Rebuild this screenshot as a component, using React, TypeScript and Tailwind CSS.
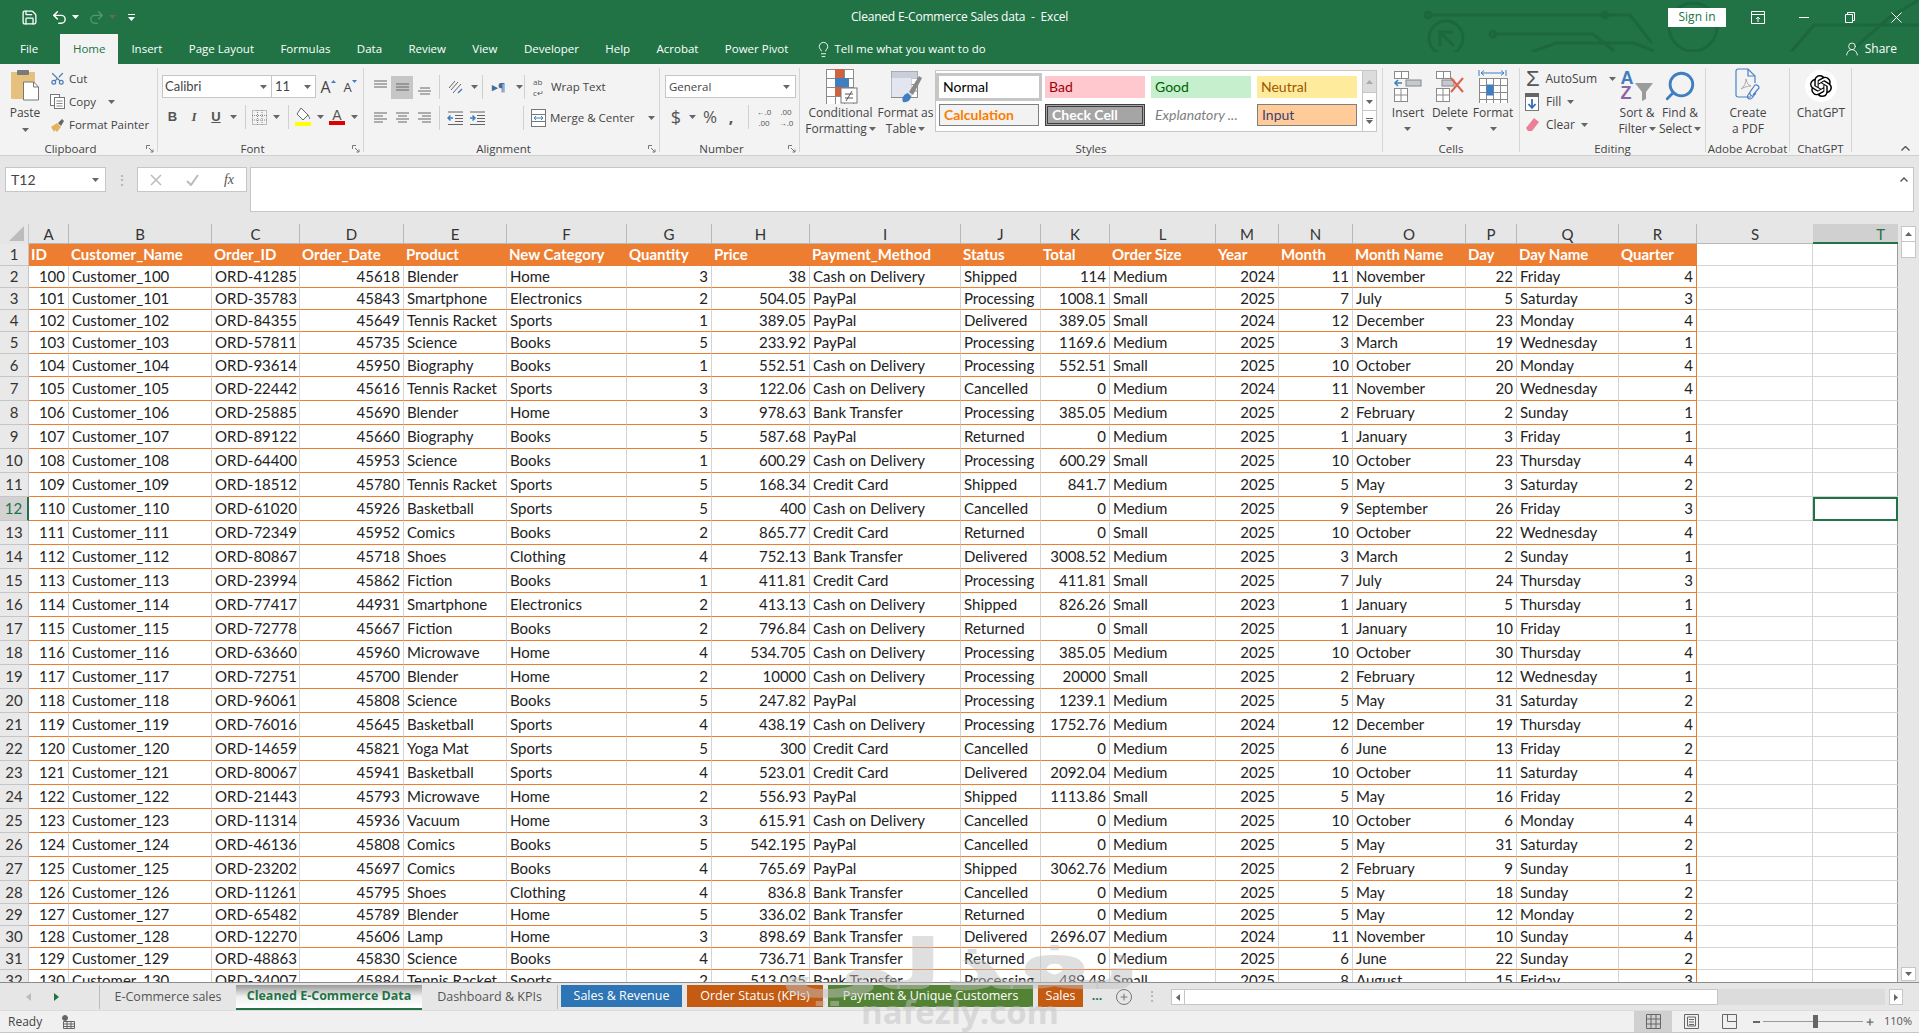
import { ReactNode } from 'react'
import { SiOpenai } from 'react-icons/si'
import { Lightbulb, Save, Undo2, Redo2, UserRound, Plus, Scissors, Search } from 'lucide-react'

const columns = [
    { name: 'A', w: 'w-[40px]', right: true, head: 'ID' },
    { name: 'B', w: 'w-[143px]', head: 'Customer_Name' },
    { name: 'C', w: 'w-[88px]', head: 'Order_ID' },
    { name: 'D', w: 'w-[104px]', right: true, head: 'Order_Date' },
    { name: 'E', w: 'w-[103px]', head: 'Product' },
    { name: 'F', w: 'w-[120px]', head: 'New Category' },
    { name: 'G', w: 'w-[85px]', right: true, head: 'Quantity' },
    { name: 'H', w: 'w-[98px]', right: true, head: 'Price' },
    { name: 'I', w: 'w-[151px]', head: 'Payment_Method' },
    { name: 'J', w: 'w-[80px]', head: 'Status' },
    { name: 'K', w: 'w-[69px]', right: true, head: 'Total' },
    { name: 'L', w: 'w-[106px]', head: 'Order Size' },
    { name: 'M', w: 'w-[63px]', right: true, head: 'Year' },
    { name: 'N', w: 'w-[74px]', right: true, head: 'Month' },
    { name: 'O', w: 'w-[113px]', head: 'Month Name' },
    { name: 'P', w: 'w-[51px]', right: true, head: 'Day' },
    { name: 'Q', w: 'w-[102px]', head: 'Day Name' },
    { name: 'R', w: 'w-[78px]', right: true, head: 'Quarter' },
]

const rows = `100|ORD-41285|45618|Blender|Home|3|38|Cash on Delivery|Shipped|114|Medium|2024|11|November|22|Friday|4
101|ORD-35783|45843|Smartphone|Electronics|2|504.05|PayPal|Processing|1008.1|Small|2025|7|July|5|Saturday|3
102|ORD-84355|45649|Tennis Racket|Sports|1|389.05|PayPal|Delivered|389.05|Small|2024|12|December|23|Monday|4
103|ORD-57811|45735|Science|Books|5|233.92|PayPal|Processing|1169.6|Medium|2025|3|March|19|Wednesday|1
104|ORD-93614|45950|Biography|Books|1|552.51|Cash on Delivery|Processing|552.51|Small|2025|10|October|20|Monday|4
105|ORD-22442|45616|Tennis Racket|Sports|3|122.06|Cash on Delivery|Cancelled|0|Medium|2024|11|November|20|Wednesday|4
106|ORD-25885|45690|Blender|Home|3|978.63|Bank Transfer|Processing|385.05|Medium|2025|2|February|2|Sunday|1
107|ORD-89122|45660|Biography|Books|5|587.68|PayPal|Returned|0|Medium|2025|1|January|3|Friday|1
108|ORD-64400|45953|Science|Books|1|600.29|Cash on Delivery|Processing|600.29|Small|2025|10|October|23|Thursday|4
109|ORD-18512|45780|Tennis Racket|Sports|5|168.34|Credit Card|Shipped|841.7|Medium|2025|5|May|3|Saturday|2
110|ORD-61020|45926|Basketball|Sports|5|400|Cash on Delivery|Cancelled|0|Medium|2025|9|September|26|Friday|3
111|ORD-72349|45952|Comics|Books|2|865.77|Credit Card|Returned|0|Small|2025|10|October|22|Wednesday|4
112|ORD-80867|45718|Shoes|Clothing|4|752.13|Bank Transfer|Delivered|3008.52|Medium|2025|3|March|2|Sunday|1
113|ORD-23994|45862|Fiction|Books|1|411.81|Credit Card|Processing|411.81|Small|2025|7|July|24|Thursday|3
114|ORD-77417|44931|Smartphone|Electronics|2|413.13|Cash on Delivery|Shipped|826.26|Small|2023|1|January|5|Thursday|1
115|ORD-72778|45667|Fiction|Books|2|796.84|Cash on Delivery|Returned|0|Small|2025|1|January|10|Friday|1
116|ORD-63660|45960|Microwave|Home|4|534.705|Cash on Delivery|Processing|385.05|Medium|2025|10|October|30|Thursday|4
117|ORD-72751|45700|Blender|Home|2|10000|Cash on Delivery|Processing|20000|Small|2025|2|February|12|Wednesday|1
118|ORD-96061|45808|Science|Books|5|247.82|PayPal|Processing|1239.1|Medium|2025|5|May|31|Saturday|2
119|ORD-76016|45645|Basketball|Sports|4|438.19|Cash on Delivery|Processing|1752.76|Medium|2024|12|December|19|Thursday|4
120|ORD-14659|45821|Yoga Mat|Sports|5|300|Credit Card|Cancelled|0|Medium|2025|6|June|13|Friday|2
121|ORD-80067|45941|Basketball|Sports|4|523.01|Credit Card|Delivered|2092.04|Medium|2025|10|October|11|Saturday|4
122|ORD-21443|45793|Microwave|Home|2|556.93|PayPal|Shipped|1113.86|Small|2025|5|May|16|Friday|2
123|ORD-11314|45936|Vacuum|Home|3|615.91|Cash on Delivery|Cancelled|0|Medium|2025|10|October|6|Monday|4
124|ORD-46136|45808|Comics|Books|5|542.195|PayPal|Cancelled|0|Medium|2025|5|May|31|Saturday|2
125|ORD-23202|45697|Comics|Books|4|765.69|PayPal|Shipped|3062.76|Medium|2025|2|February|9|Sunday|1
126|ORD-11261|45795|Shoes|Clothing|4|836.8|Bank Transfer|Cancelled|0|Medium|2025|5|May|18|Sunday|2
127|ORD-65482|45789|Blender|Home|5|336.02|Bank Transfer|Returned|0|Medium|2025|5|May|12|Monday|2
128|ORD-12270|45606|Lamp|Home|3|898.69|Bank Transfer|Delivered|2696.07|Medium|2024|11|November|10|Sunday|4
129|ORD-48863|45830|Science|Books|4|736.71|Bank Transfer|Returned|0|Medium|2025|6|June|22|Sunday|2
130|ORD-34007|45884|Tennis Racket|Sports|2|513.035|Bank Transfer|Processing|489.48|Small|2025|8|August|15|Friday|3`
    .split('\n')
    .map((line) => {
        const [id, ...rest] = line.split('|')
        return [id, `Customer_${id}`, ...rest]
    })

const rowHeight = (n: number) => {
    if (n === 6 || n === 28) return 'h-[23px]'
    if (n >= 7 && n <= 27) return 'h-[24px]'
    return 'h-[22px]'
}

const Caret = ({ className = '' }: { className?: string }) => (
    <svg width="7" height="4" viewBox="0 0 7 4" className={`shrink-0 text-[#666] ${className}`}>
        <path d="M0 0h7L3.5 4z" fill="currentColor" />
    </svg>
)

const Launcher = () => (
    <svg width="8" height="8" viewBox="0 0 8 8" fill="none" stroke="#777" strokeWidth="1">
        <path d="M.5 4V.5H4M3 3l4 4M7 4.5V7H4.5" />
    </svg>
)

const Sep = ({ className = 'h-[24px]' }: { className?: string }) => <div className={`w-px bg-[#d0d0d0] shrink-0 ${className}`} />

function Group({ w, label, launcher, children }: { w: string; label: string; launcher?: boolean; children: ReactNode }) {
    return (
        <div className={`${w} shrink-0 h-[84px] flex flex-col border-r border-[#d6d6d6]`}>
            <div className="h-[72px] flex">{children}</div>
            <div className={`h-[12px] relative flex justify-center whitespace-nowrap text-[11.5px] leading-[18px] text-[#444] ${launcher ? 'pr-[16px]' : ''}`}>
                {label}
                {launcher && (
                    <span className="absolute right-[3px] top-[5px]">
                        <Launcher />
                    </span>
                )}
            </div>
        </div>
    )
}

function BigButton({ w, icon, lines, caret }: { w: string; icon: ReactNode; lines: string[]; caret?: 'inline' | 'below' }) {
    return (
        <div className={`${w} shrink-0 flex flex-col items-center pt-[2px] text-[12px] leading-[16px] text-[#444]`}>
            <div className="h-[32px] flex items-center justify-center">{icon}</div>
            <div className="mt-[3px] flex flex-col items-center whitespace-nowrap">
                {lines.map((line, i) => (
                    <div key={line} className="h-[16px] flex items-center gap-[2px]">
                        {line}
                        {caret === 'inline' && i === lines.length - 1 && <Caret />}
                    </div>
                ))}
                {caret === 'below' && (
                    <div className="h-[16px] flex items-center">
                        <Caret />
                    </div>
                )}
            </div>
        </div>
    )
}

const Tool = ({ w, children, className = '' }: { w: string; children: ReactNode; className?: string }) => (
    <div className={`${w} h-[23px] shrink-0 flex items-center justify-center ${className}`}>{children}</div>
)

function Lines({ align }: { align: 'top' | 'middle' | 'bottom' | 'left' | 'center' | 'right' }) {
    const vertical = {
        top: 'M1 2h13M1 5h13M1 8h13',
        middle: 'M1 5h13M1 8h13M1 11h13',
        bottom: 'M3 9h10M1 12h13M3 15h10',
    }
    const horizontal = {
        left: 'M1 3h13M1 6h9M1 9h13M1 12h9',
        center: 'M1 3h13M3 6h9M1 9h13M3 12h9',
        right: 'M1 3h13M5 6h9M1 9h13M5 12h9',
    }
    const d = { ...vertical, ...horizontal }[align]
    return (
        <svg width="15" height="16" viewBox="0 0 15 16" fill="none" stroke="#666" strokeWidth="1">
            <path d={d} />
        </svg>
    )
}

const GridIcon = ({ rows: r, cols, x, y, s }: { rows: number; cols: number; x: number; y: number; s: number }) => (
    <g fill="none" stroke="#8a8a8a" strokeWidth="1">
        <rect x={x + 0.5} y={y + 0.5} width={cols * s} height={r * s} fill="#fff" />
        {Array.from({ length: cols - 1 }, (_, i) => (
            <path key={`c${i}`} d={`M${x + 0.5 + (i + 1) * s} ${y}v${r * s}`} />
        ))}
        {Array.from({ length: r - 1 }, (_, i) => (
            <path key={`r${i}`} d={`M${x} ${y + 0.5 + (i + 1) * s}h${cols * s}`} />
        ))}
    </g>
)

const PasteIcon = () => (
    <svg width="30" height="32" viewBox="0 0 30 32">
        <rect x="1" y="3" width="24" height="27" rx="1" fill="#e6c17e" />
        <rect x="7" y="1" width="12" height="5" rx="1" fill="#7a7a7a" />
        <path d="M13.5 13h10l5 5v13h-15z" fill="#fff" stroke="#777" />
        <path d="M23.5 13v5h5" fill="none" stroke="#777" />
    </svg>
)

const CopyIcon = () => (
    <svg width="15" height="15" viewBox="0 0 15 15" fill="#fff" stroke="#777">
        <rect x=".5" y=".5" width="9" height="11" />
        <rect x="4.5" y="3.5" width="10" height="11" />
        <path d="M6.5 7h6M6.5 9.5h6M6.5 12h6" stroke="#888" />
    </svg>
)

const PainterIcon = () => (
    <svg width="16" height="16" viewBox="0 0 16 16">
        <path d="M1 10l6-4 4 4-4 5-2-2-1 2z" fill="#e3b25d" />
        <path d="M8 6l4-4 2 2-3 5z" fill="#666" />
    </svg>
)

const FillIcon = () => (
    <svg width="16" height="20" viewBox="0 0 16 20" fill="none">
        <path d="M6 1l7 7-5 5-6-6z" fill="#fff" stroke="#666" />
        <path d="M13 8c1 2 2 3 1.500 4" stroke="#666" />
        <rect x="0" y="15" width="16" height="4" fill="#ffff00" />
    </svg>
)

const CondIcon = () => (
    <svg width="34" height="36" viewBox="0 0 34 36">
        <GridIcon rows={4} cols={3} x={2} y={1} s={9} />
        <rect x="11" y="1" width="9" height="9" fill="#d0633e" />
        <rect x="11" y="10" width="14" height="9" fill="#3f7fc1" />
        <rect x="11" y="19" width="9" height="9" fill="#d0633e" />
        <rect x="17" y="20" width="16" height="15" fill="#fff" stroke="#777" />
        <path d="M21 26h8M21 30h8M28 23l-6 10" stroke="#555" fill="none" />
    </svg>
)

const TableIcon = () => (
    <svg width="32" height="36" viewBox="0 0 32 36">
        <GridIcon rows={4} cols={4} x={1} y={3} s={6.5} />
        <rect x="1.500" y="3.500" width="26" height="6.500" fill="#c9cedb" />
        <rect x="1.500" y="10" width="20" height="19" fill="#e3e6ee" />
        <path d="M13 34c-2-4 1-8 5-9l3 3c0 4-4 7-8 6z" fill="#3f7fc1" />
        <path d="M19 24L29 8l3 2-9 17z" fill="#8a8a8a" />
    </svg>
)

const InsertIcon = () => (
    <svg width="30" height="32" viewBox="0 0 30 32">
        <GridIcon rows={1} cols={2} x={1} y={1} s={7} />
        <GridIcon rows={2} cols={2} x={1} y={18} s={6.500} />
        <rect x="13" y="10" width="15" height="6" fill="#c4c8d0" stroke="#888" />
        <path d="M2 13h7M5 10l-3 3 3 3" stroke="#3f7fc1" strokeWidth="1.600" fill="none" />
    </svg>
)

const DeleteIcon = () => (
    <svg width="30" height="32" viewBox="0 0 30 32">
        <GridIcon rows={1} cols={2} x={1} y={1} s={7} />
        <GridIcon rows={2} cols={2} x={1} y={18} s={6.500} />
        <rect x="7" y="10" width="12" height="6" fill="#c4c8d0" stroke="#888" />
        <path d="M16 8l12 14M28 8L16 22" stroke="#d9634c" strokeWidth="2" fill="none" />
    </svg>
)

const FormatIcon = () => (
    <svg width="30" height="34" viewBox="0 0 30 34">
        <path d="M3 4h23M6 1.500L3 4l3 2.500M23 1.500L26 4l-3 2.500M1 1v6M28 1v6" stroke="#3f7fc1" fill="none" />
        <GridIcon rows={4} cols={4} x={1} y={9} s={7} />
        <rect x="8.500" y="15.500" width="7" height="11" fill="#3f7fc1" />
    </svg>
)

const SortIcon = () => (
    <svg width="34" height="34" viewBox="0 0 34 34">
        <path d="M15 14h18l-7 9v7l-4 2v-9z" fill="#9b9b9b" />
    </svg>
)

const PdfIcon = () => (
    <svg width="28" height="36" viewBox="0 0 28 36" fill="none" stroke="#4d7fc9" strokeWidth="1.200">
        <path d="M17 29H4a2 2 0 0 1-2-2V3a2 2 0 0 1 2-2h10l7 7v7" />
        <path d="M14 1v7h7" />
        <path d="M7 21c3-2 5-6 5-10 1 4 2 6 5 7-3 0-7 1-10 3z" strokeWidth=".8" stroke="#9a9aa0" />
        <path d="M19 27l6-7a3 3 0 0 0-4-3l-5 7a3 3 0 0 0 3 4M18 21l-4 6a2.500 2.500 0 0 0 4 3l4-5" />
    </svg>
)

const ViewIcon = ({ d }: { d: string }) => (
    <svg width="15" height="17" viewBox="0 0 15 17" fill="none" stroke="#666">
        <path d={d} />
    </svg>
)

const styleCell = 'h-[22px] flex items-center pl-[4px] pb-[2px] text-[14px] font-[Lato,sans-serif] overflow-hidden whitespace-nowrap'

function Ribbon() {
    return (
        <div className="h-[92px] shrink-0 bg-[#f3f3f3] border-b border-[#d0d0d0] pt-[4px] flex font-['Open_Sans',sans-serif]">
            <Group w="w-[158px]" label="Clipboard" launcher>
                <div className="w-[50px] shrink-0 flex flex-col items-center pt-[1px] text-[12px] leading-[16px] text-[#444]">
                    <PasteIcon />
                    <div className="mt-[4px]">Paste</div>
                    <Caret className="mt-[7px]" />
                </div>
                <div className="-mt-[1px] flex flex-col text-[11.5px] text-[#444] whitespace-nowrap">
                    <div className="h-[23px] flex items-center gap-[4px]">
                        <Scissors size={15} className="text-[#4d7fb3] -rotate-90" />
                        Cut
                    </div>
                    <div className="h-[23px] flex items-center gap-[4px]">
                        <CopyIcon />
                        Copy
                        <Caret className="ml-[8px]" />
                    </div>
                    <div className="h-[23px] flex items-center gap-[3px]">
                        <PainterIcon />
                        Format Painter
                    </div>
                </div>
            </Group>

            <Group w="w-[206px]" label="Font" launcher>
                <div className="pl-[4px] pt-[7px] flex flex-col gap-[7px]">
                    <div className="flex items-center text-[#444]">
                        <div className="w-[110px] h-[23px] bg-white border border-[#c6c6c6] flex items-center justify-between pl-[2px] pr-[4px] text-[13px] font-[Lato,sans-serif]">
                            Calibri
                            <Caret />
                        </div>
                        <div className="w-[44px] h-[23px] bg-white border border-[#c6c6c6] border-l-0 flex items-center justify-between pl-[3px] pr-[4px] text-[13px] font-[Lato,sans-serif]">
                            11
                            <Caret />
                        </div>
                        <Tool w="w-[22px]" className="text-[16px] ml-[1px]">
                            <span>A</span>
                            <svg width="5" height="3" viewBox="0 0 5 3" className="-mt-[10px]">
                                <path d="M0 3h5L2.500 0z" fill="#3f7fc1" />
                            </svg>
                        </Tool>
                        <Tool w="w-[22px]" className="text-[13px]">
                            <span className="mt-[2px]">A</span>
                            <svg width="5" height="3" viewBox="0 0 5 3" className="-mt-[10px]">
                                <path d="M0 0h5L2.500 3z" fill="#3f7fc1" />
                            </svg>
                        </Tool>
                    </div>
                    <div className="flex items-center text-[#555] text-[13px]">
                        <Tool w="w-[21px]" className="font-bold font-['Liberation_Sans']">B</Tool>
                        <Tool w="w-[22px]" className="italic font-['Liberation_Serif'] font-bold">I</Tool>
                        <Tool w="w-[22px]" className="underline font-bold font-['Liberation_Sans']">U</Tool>
                        <Tool w="w-[12px]"><Caret /></Tool>
                        <Sep className="h-[24px] ml-[6px]" />
                        <Tool w="w-[26px]">
                            <svg width="15" height="15" viewBox="0 0 15 15" fill="none" stroke="#888" strokeDasharray="1 1">
                                <path d="M.5.500h14v14H.500zM5.500 0v15M10 0v15M0 5.500h15M0 10h15" />
                            </svg>
                        </Tool>
                        <Tool w="w-[8px]"><Caret /></Tool>
                        <Sep className="h-[24px] ml-[8px]" />
                        <Tool w="w-[28px]"><FillIcon /></Tool>
                        <Tool w="w-[6px]"><Caret /></Tool>
                        <Tool w="w-[28px]" className="flex-col leading-[12px] font-['Liberation_Sans'] text-[14px]">
                            A
                            <span className="block w-[16px] h-[4px] bg-[#e00000]" />
                        </Tool>
                        <Tool w="w-[6px]"><Caret /></Tool>
                    </div>
                </div>
            </Group>

            <Group w="w-[296px]" label="Alignment" launcher>
                <div className="pl-[5px] pt-[7px] flex flex-col gap-[7px] text-[11.5px] text-[#444] whitespace-nowrap">
                    <div className="flex items-center">
                        <Tool w="w-[22px]"><Lines align="top" /></Tool>
                        <Tool w="w-[22px]" className="bg-[#c6c6c6]"><Lines align="middle" /></Tool>
                        <Tool w="w-[22px]"><Lines align="bottom" /></Tool>
                        <Sep className="h-[24px] ml-[4px]" />
                        <Tool w="w-[30px]">
                            <svg width="16" height="16" viewBox="0 0 16 16" fill="none" stroke="#666">
                                <path d="M2 9l6-7M4 11l7-8M6 14l8-9" />
                                <path d="M11 14l4-4" stroke="#3f7fc1" strokeWidth="1.500" />
                            </svg>
                        </Tool>
                        <Tool w="w-[9px]"><Caret /></Tool>
                        <Sep className="h-[24px] ml-[3px]" />
                        <Tool w="w-[31px]">
                            <span className="text-[#3f6f9f] text-[11px] font-bold">▸¶</span>
                        </Tool>
                        <Tool w="w-[10px]"><Caret /></Tool>
                        <Sep className="h-[24px]" />
                        <div className="h-[23px] flex items-center ml-[8px] gap-[5px]">
                            <div className="w-[13px] flex flex-col text-[8px] leading-[11px] text-[#555]">
                                <span>ab</span>
                                <span>c↵</span>
                            </div>
                            Wrap Text
                        </div>
                    </div>
                    <div className="flex items-center">
                        <Tool w="w-[22px]"><Lines align="left" /></Tool>
                        <Tool w="w-[22px]"><Lines align="center" /></Tool>
                        <Tool w="w-[22px]"><Lines align="right" /></Tool>
                        <Sep className="h-[24px] ml-[4px]" />
                        <Tool w="w-[22px]" className="ml-[4px]">
                            <svg width="16" height="14" viewBox="0 0 16 14" fill="none" stroke="#666">
                                <path d="M1 1h15M8 4.500h8M8 7.500h8M8 10.500h8M1 13.500h15" />
                                <path d="M6 7H1M3.500 4.500L1 7l2.500 2.500" stroke="#3f7fc1" strokeWidth="1.500" />
                            </svg>
                        </Tool>
                        <Tool w="w-[22px]">
                            <svg width="16" height="14" viewBox="0 0 16 14" fill="none" stroke="#666">
                                <path d="M1 1h15M8 4.500h8M8 7.500h8M8 10.500h8M1 13.500h15" />
                                <path d="M1 7h5M3.500 4.500L6 7 3.500 9.500" stroke="#3f7fc1" strokeWidth="1.500" />
                            </svg>
                        </Tool>
                        <Sep className="h-[24px] ml-[35px]" />
                        <div className="h-[23px] flex items-center ml-[7px] gap-[4px]">
                            <svg width="15" height="18" viewBox="0 0 15 18" fill="#fff" stroke="#777">
                                <rect x=".5" y=".5" width="14" height="17" />
                                <path d="M0 5.500h15M0 12.500h15" />
                                <path d="M3 9h9M5 7L3 9l2 2M10 7l2 2-2 2" stroke="#3f7fc1" fill="none" />
                            </svg>
                            Merge &amp; Center
                            <Caret className="ml-[9px]" />
                        </div>
                    </div>
                </div>
            </Group>

            <Group w="w-[140px]" label="Number" launcher>
                <div className="pl-[5px] pt-[7px] flex flex-col gap-[7px] text-[#555]">
                    <div className="w-[131px] h-[23px] bg-white border border-[#c6c6c6] flex items-center justify-between pl-[3px] pr-[5px] text-[11.5px] text-[#444]">
                        General
                        <Caret />
                    </div>
                    <div className="flex items-center">
                        <Tool w="w-[22px]" className="text-[18px]">$</Tool>
                        <Tool w="w-[10px]"><Caret /></Tool>
                        <Tool w="w-[26px]" className="text-[17px]">%</Tool>
                        <Tool w="w-[16px]" className="text-[16px] font-bold">,</Tool>
                        <Sep className="h-[24px] ml-[9px]" />
                        <Tool w="w-[26px]" className="flex-col text-[8px] leading-[11px] ml-[2px]">
                            <span>←.0</span>
                            <span>.00</span>
                        </Tool>
                        <Tool w="w-[18px]" className="flex-col text-[8px] leading-[11px]">
                            <span>.00</span>
                            <span>→.0</span>
                        </Tool>
                    </div>
                </div>
            </Group>

            <Group w="w-[583px]" label="Styles">
                <BigButton w="w-[65px] ml-[8px]" icon={<CondIcon />} lines={['Conditional', 'Formatting']} caret="inline" />
                <BigButton w="w-[65px]" icon={<TableIcon />} lines={['Format as', 'Table']} caret="inline" />
                <div className="mt-[2px] -ml-[3px] w-[442px] h-[62px] bg-white border border-[#c6c6c6] flex relative">
                    <div className="pl-[3px] pt-[5px] grid grid-cols-[100px_100px_100px_100px] grid-rows-[22px_22px] gap-[6px]">
                        <div className={`${styleCell} bg-white outline-3 outline-[#c6c6c6] text-black`}>Normal</div>
                        <div className={`${styleCell} bg-[#ffc7ce] text-[#9c0006]`}>Bad</div>
                        <div className={`${styleCell} bg-[#c6efce] text-[#006100]`}>Good</div>
                        <div className={`${styleCell} bg-[#ffeb9c] text-[#9c5700]`}>Neutral</div>
                        <div className={`${styleCell} bg-[#f2f2f2] border border-[#7f7f7f] text-[#fa7d00] font-bold`}>Calculation</div>
                        <div className={`${styleCell} bg-[#a5a5a5] border-[3px] border-double border-[#3f3f3f] text-white font-bold`}>Check Cell</div>
                        <div className={`${styleCell} italic text-[#7f7f7f]`}>Explanatory ...</div>
                        <div className={`${styleCell} bg-[#ffcc99] border border-[#7f7f7f] text-[#3f3f76]`}>Input</div>
                    </div>
                    <div className="ml-auto w-[14px] flex flex-col border-l border-[#c6c6c6]">
                        <div className="h-[21px] bg-[#dcdcdc] flex items-center justify-center"><Caret className="rotate-180 text-[#aaa]" /></div>
                        <div className="h-[19px] border-y border-[#c6c6c6] flex items-center justify-center"><Caret /></div>
                        <div className="flex-1 flex flex-col items-center justify-center gap-[1px]">
                            <div className="w-[7px] h-px bg-[#666]" />
                            <Caret />
                        </div>
                    </div>
                </div>
            </Group>

            <Group w="w-[137px]" label="Cells">
                <BigButton w="w-[42px] ml-[4px]" icon={<InsertIcon />} lines={['Insert']} caret="below" />
                <BigButton w="w-[42px]" icon={<DeleteIcon />} lines={['Delete']} caret="below" />
                <BigButton w="w-[44px]" icon={<FormatIcon />} lines={['Format']} caret="below" />
            </Group>

            <Group w="w-[186px]" label="Editing">
                <div className="w-[91px] ml-[5px] -mt-[1px] shrink-0 flex flex-col text-[12px] text-[#444]">
                    <div className="h-[23px] flex items-center gap-[5px]">
                        <span className="w-[16px] text-[22px] font-['Liberation_Sans'] text-[#555] leading-none text-center">Σ</span>
                        AutoSum
                        <Caret className="ml-[7px]" />
                    </div>
                    <div className="h-[23px] flex items-center gap-[6px]">
                        <svg width="15" height="18" viewBox="0 0 15 18">
                            <rect x=".5" y=".5" width="13" height="17" fill="#fff" stroke="#777" />
                            <rect x="0" y="0" width="14" height="4" fill="#666" />
                            <path d="M7 6v9M3.500 11L7 15l3.500-4" stroke="#2f6fb3" strokeWidth="1.800" fill="none" />
                        </svg>
                        Fill
                        <Caret />
                    </div>
                    <div className="h-[23px] flex items-center gap-[6px]">
                        <svg width="15" height="16" viewBox="0 0 15 16">
                            <path d="M9 1l5 4-7 9H3l-2-3z" fill="#ea7f97" />
                        </svg>
                        Clear
                        <Caret />
                    </div>
                </div>
                <BigButton
                    w="w-[42px]"
                    icon={
                        <div className="flex items-center">
                            <div className="flex flex-col text-[18px] leading-[15px] font-bold font-['Liberation_Sans']">
                                <span className="text-[#3f7fc1]">A</span>
                                <span className="text-[#8a66a8]">Z</span>
                            </div>
                            <div className="-ml-[14px]"><SortIcon /></div>
                        </div>
                    }
                    lines={['Sort &', 'Filter']}
                    caret="inline"
                />
                <BigButton w="w-[44px]" icon={<Search size={34} strokeWidth={2} className="text-[#3f7fc1] -scale-x-100" />} lines={['Find &', 'Select']} caret="inline" />
            </Group>

            <Group w="w-[84px]" label="Adobe Acrobat">
                <BigButton w="w-[84px]" icon={<PdfIcon />} lines={['Create', 'a PDF']} />
            </Group>

            <Group w="w-[62px]" label="ChatGPT">
                <BigButton
                    w="w-[62px]"
                    icon={
                        <div className="w-[32px] h-[32px] rounded-full bg-white flex items-center justify-center">
                            <SiOpenai size={22} className="text-black" />
                        </div>
                    }
                    lines={['ChatGPT']}
                />
            </Group>

            <div className="flex-1 flex justify-end items-end pr-[9px] pb-[4px]">
                <svg width="9" height="5" viewBox="0 0 9 5" fill="none" stroke="#555" strokeWidth="1.400">
                    <path d="M.5 4.500l4-4 4 4" />
                </svg>
            </div>
        </div>
    )
}

function TitleBar() {
    const tabs = ['Insert', 'Page Layout', 'Formulas', 'Data', 'Review', 'View', 'Developer', 'Help', 'Acrobat', 'Power Pivot']
    return (
        <div className="h-[64px] shrink-0 bg-[#217346] text-white relative font-['Open_Sans',sans-serif]">
            <svg width="497" height="52" viewBox="1422 0 497 52" fill="none" stroke="#1d673e" strokeWidth="3" className="absolute right-0 top-0">
                <path d="M1428 15h177h25l22 28M1493 34h100l21 17M1532 52l24-9h78l20 8M1791 52l23-27h105M1850 52l40-35 29-17" />
                <circle cx="1428" cy="15" r="3" />
                <circle cx="1605" cy="15" r="3" />
                <circle cx="1493" cy="34" r="3" />
                <circle cx="1446" cy="38" r="17" />
                <path d="M1440 46v-14h13M1440 32l14 14" />
                <circle cx="1693" cy="27" r="24" />
            </svg>
            <div className="relative h-[34px] grid grid-cols-[1fr_auto_1fr] items-center">
                <div className="flex items-center pl-[21px]">
                    <Save size={17} strokeWidth={1.800} />
                    <Undo2 size={17} strokeWidth={2} className="ml-[13px]" />
                    <Caret className="ml-[4px] text-white" />
                    <Redo2 size={17} strokeWidth={2} className="ml-[9px] text-[#4c9670]" />
                    <Caret className="ml-[4px] text-[#4c9670]" />
                    <svg width="7" height="7" viewBox="0 0 7 7" fill="#fff" className="ml-[12px]">
                        <path d="M0 0h7v1H0zM0 3h7L3.500 7z" />
                    </svg>
                </div>
                <div className="text-[12px] tracking-[-0.2px]">Cleaned E-Commerce Sales data&nbsp; -&nbsp; Excel</div>
                <div className="flex items-center justify-end">
                    <div className="w-[58px] h-[19px] bg-white text-[#217346] text-[12px] flex items-center justify-center">Sign in</div>
                    <svg width="14" height="13" viewBox="0 0 14 13" fill="none" stroke="#fff" className="ml-[25px]">
                        <path d="M.5 3.500v9h13v-9zM.5.500h13v3H.5zM7 11V6M5 8l2-2 2 2" />
                    </svg>
                    <div className="w-[10px] h-px bg-white ml-[34px]" />
                    <svg width="10" height="11" viewBox="0 0 10 11" fill="none" stroke="#fff" className="ml-[36px]">
                        <path d="M.5 2.500h7v8h-7zM2.500 2.500v-2h7v8h-2" />
                    </svg>
                    <svg width="11" height="11" viewBox="0 0 11 11" fill="none" stroke="#fff" className="ml-[36px] mr-[17px]">
                        <path d="M.5.500l10 10M10.500.500l-10 10" />
                    </svg>
                </div>
            </div>
            <div className="relative h-[30px] flex text-[11.5px] items-stretch pl-[6px]">
                <div className="pl-[14px] pr-[22px] flex items-center">File</div>
                <div className="w-[58px] justify-center bg-[#f3f3f3] text-[#217346] flex items-center">Home</div>
                {tabs.map((tab) => (
                    <div key={tab} className="px-[13.200px] flex items-center whitespace-nowrap">{tab}</div>
                ))}
                <div className="ml-[13px] flex items-center gap-[3px] whitespace-nowrap">
                    <Lightbulb size={17} strokeWidth={1.300} />
                    Tell me what you want to do
                </div>
                <div className="ml-auto mr-[22px] flex items-center gap-[5px] text-[12px]">
                    <UserRound size={16} strokeWidth={1.300} />
                    Share
                </div>
            </div>
        </div>
    )
}

function FormulaBar() {
    return (
        <div className="h-[68px] shrink-0 bg-[#e6e6e6] pt-[11px] pl-[5px] pr-[5px] flex font-[Lato,sans-serif]">
            <div className="w-[101px] h-[25px] bg-white border border-[#c6c6c6] flex items-center justify-between pl-[5px] pr-[6px] text-[14px] text-[#444]">
                T12
                <Caret />
            </div>
            <div className="w-[31px] h-[25px] flex items-center justify-center text-[#aaa] text-[14px]">⋮</div>
            <div className="w-[110px] h-[25px] bg-white border border-[#c6c6c6] flex items-center justify-between px-[12px] text-[#bbb]">
                <svg width="12" height="12" viewBox="0 0 12 12" stroke="currentColor" strokeWidth="1.500">
                    <path d="M1 1l10 10M11 1L1 11" />
                </svg>
                <svg width="13" height="12" viewBox="0 0 13 12" fill="none" stroke="currentColor" strokeWidth="2">
                    <path d="M1 7l4 4 7-10" />
                </svg>
                <span className="text-[14px] italic font-['Liberation_Serif'] text-[#555]">fx</span>
            </div>
            <div className="ml-[3px] flex-1 h-[45px] bg-white border border-[#c6c6c6] flex justify-end pt-[9px] pr-[5px]">
                <svg width="8" height="5" viewBox="0 0 8 5" fill="none" stroke="#555" strokeWidth="1.400">
                    <path d="M.5 4.500l3.500-3.500 3.500 3.500" />
                </svg>
            </div>
        </div>
    )
}

function Sheet() {
    return (
        <div className="flex-1 min-h-0 flex overflow-hidden font-[Lato,sans-serif] text-[15px] text-[#222]">
            <div className="w-[1898px] shrink-0 bg-white border-r border-[#9a9a9a]">
                <div className="h-[20px] flex bg-[#e6e6e6] text-[15px] leading-[20px] text-[#333]">
                    <div className="w-[29px] shrink-0 border-r border-[#c6c6c6] flex items-end justify-end pr-[4px] pb-[3px]">
                        <svg width="15" height="15" viewBox="0 0 15 15"><path d="M15 0v15H0z" fill="#bcbcbc" /></svg>
                    </div>
                    {columns.map((c) => (
                        <div key={c.name} className={`${c.w} shrink-0 border-r border-b border-[#b8b8b8] text-center`}>{c.name}</div>
                    ))}
                    <div className="w-[116px] shrink-0 border-b border-[#b8b8b8] text-center">S</div>
                    <div className="w-[85px] shrink-0 bg-[#d0d0d0] border-b-2 border-[#217346] text-[#217346] text-right pr-[13px]">T</div>
                </div>

                <div className="h-[22px] flex font-bold text-white leading-[21px]">
                    <div className="w-[29px] shrink-0 bg-[#e9e9e9] border-r border-b border-[#c6c6c6] text-center text-[#333] font-normal">1</div>
                    {columns.map((c) => (
                        <div key={c.name} className={`${c.w} shrink-0 bg-[#ed7d31] pl-[2px] whitespace-nowrap overflow-hidden`}>{c.head}</div>
                    ))}
                    <div className="w-[116px] shrink-0 border-r border-b border-[#d4d4d4]" />
                    <div className="w-[85px] shrink-0 border-b border-[#d4d4d4]" />
                </div>

                {rows.map((row, r) => {
                    const n = r + 2
                    const active = n === 12
                    return (
                        <div key={n} className={`flex ${rowHeight(n)}`}>
                            <div className={`w-[29px] shrink-0 border-b border-[#c6c6c6] flex items-center justify-center ${active ? 'bg-[#d2d2d2] text-[#217346] border-r-2 border-r-[#217346]' : 'bg-[#e9e9e9] text-[#333] border-r'}`}>{n}</div>
                            {columns.map((c, i) => (
                                <div key={c.name} className={`${c.w} shrink-0 flex items-center px-[3px] whitespace-nowrap overflow-hidden border-r border-r-[#d4d4d4] border-b border-b-[#ed7d31] ${c.right ? 'justify-end' : ''} ${i === columns.length - 1 ? 'border-r-[#ed7d31]' : ''}`}>{row[i]}</div>
                            ))}
                            <div className="w-[116px] shrink-0 border-r border-b border-[#d4d4d4]" />
                            <div className={`w-[85px] shrink-0 ${active ? 'border-2 border-[#217346]' : 'border-b border-[#d4d4d4]'}`} />
                        </div>
                    )
                })}
            </div>
            <div className="flex-1 bg-[#e6e6e6] flex flex-col items-center pt-[2px] pb-[1px]">
                <div className="w-[15px] h-[16px] bg-white border border-[#c6c6c6] flex items-center justify-center"><Caret className="rotate-180" /></div>
                <div className="w-[15px] h-[17px] bg-white border border-[#c6c6c6] -mt-px" />
                <div className="w-[15px] h-[14px] mt-auto bg-white border border-[#c6c6c6] flex items-center justify-center"><Caret /></div>
            </div>
        </div>
    )
}

function SheetTabs() {
    return (
        <div className="h-[28px] shrink-0 bg-[#e6e6e6] border-t border-[#8c8c8c] flex items-start font-['Open_Sans',sans-serif] text-[12.5px] whitespace-nowrap">
            <div className="w-[100px] h-[24px] mt-[2px] shrink-0 flex items-center pl-[26px] gap-[23px] border-r border-[#bcbcbc]">
                <svg width="5" height="8" viewBox="0 0 5 8"><path d="M5 0v8L0 4z" fill="#bbb" /></svg>
                <svg width="5" height="8" viewBox="0 0 5 8"><path d="M0 0v8l5-4z" fill="#217346" /></svg>
            </div>
            <div className="w-[136px] h-[24px] mt-[2px] flex items-center justify-center text-[#555]">E-Commerce sales</div>
            <div className="w-[186px] h-[25px] mt-[2px] flex items-center justify-center font-bold text-[#217346] bg-gradient-to-b from-[#9a9a9a] via-[#f0f0f0] to-white border-b-2 border-[#217346]">Cleaned E-Commerce Data</div>
            <div className="w-[136px] h-[24px] mt-[2px] flex items-center justify-center text-[#555] border-r border-[#bcbcbc]">Dashboard &amp; KPIs</div>
            <div className="w-[121px] h-[22px] mt-[2px] ml-[3px] flex items-center justify-center text-white bg-[#2e75b6]">Sales &amp; Revenue</div>
            <div className="w-[136px] h-[22px] mt-[2px] ml-[5px] flex items-center justify-center text-white bg-[#c55a11]">Order Status (KPIs)</div>
            <div className="w-[205px] h-[22px] mt-[2px] ml-[5px] flex items-center justify-center text-white bg-[#548235]">Payment &amp; Unique Customers</div>
            <div className="w-[45px] h-[22px] mt-[2px] ml-[5px] flex items-center justify-center text-white bg-[#c55a11]">Sales</div>
            <div className="w-[14px] h-[22px] mt-[2px] ml-[7px] flex items-center justify-center text-[#217346] font-bold">...</div>
            <div className="h-[16px] w-[16px] mt-[6px] ml-[12px] rounded-full border border-[#777] flex items-center justify-center text-[#777]">
                <Plus size={10} strokeWidth={2.500} />
            </div>
            <div className="mt-[3px] ml-[13px] text-[#aaa] text-[14px] leading-[20px]">⋮</div>
            <div className="ml-[12px] mt-[6px] h-[16px] w-[732px] flex items-stretch">
                <div className="w-[14px] bg-white border border-[#c6c6c6] flex items-center justify-center">
                    <svg width="4" height="7" viewBox="0 0 4 7"><path d="M4 0v7L0 3.500z" fill="#666" /></svg>
                </div>
                <div className="w-[533px] bg-white border-y border-r border-[#c6c6c6]" />
                <div className="flex-1 bg-[#dcdcdc]" />
                <div className="w-[14px] ml-[4px] bg-white border border-[#c6c6c6] flex items-center justify-center">
                    <svg width="4" height="7" viewBox="0 0 4 7"><path d="M0 0v7l4-3.500z" fill="#666" /></svg>
                </div>
            </div>
        </div>
    )
}

function StatusBar() {
    return (
        <div className="h-[23px] shrink-0 bg-[#f0f0f0] border-t border-[#dcdcdc] border-b border-b-[#c6c6c6] flex items-center font-['Open_Sans',sans-serif] text-[12px] text-[#444]">
            <span className="ml-[8px]">Ready</span>
            <svg width="13" height="14" viewBox="0 0 13 14" className="ml-[20px]" fill="none" stroke="#666">
                <circle cx="3" cy="3" r="2.500" fill="#666" />
                <path d="M1.500 6.500h11v7h-11zM1.500 9h11M1.500 11.500h11M5 6.500v7M9 6.500v7" />
            </svg>
            <div className="ml-auto h-full flex items-center">
                <div className="w-[38px] h-full bg-[#d0d0d0] flex items-center justify-center">
                    <ViewIcon d="M.5 1.500h14v14H.5zM5 1.500v14M10 1.500v14M.5 6h14M.5 11h14" />
                </div>
                <div className="w-[38px] flex justify-center">
                    <ViewIcon d="M.5 1.500h14v14H.5zM3.500 4h8v9h-8zM5 6.500h5M5 9h5M5 11.500h5" />
                </div>
                <div className="w-[38px] flex justify-center">
                    <ViewIcon d="M.5 1.500h14v14H.5zM5.500 1.500v7h9" />
                </div>
                <div className="w-[7px] h-[2px] bg-[#666] ml-[5px]" />
                <div className="ml-[3px] w-[100px] h-px bg-[#999] relative">
                    <div className="absolute left-[50px] -top-[6px] w-[5px] h-[13px] bg-[#666]" />
                </div>
                <Plus size={10} strokeWidth={3} className="ml-[2px] text-[#666]" />
                <span className="w-[27px] ml-[10px] mr-[7px] flex justify-end text-[11px] text-[#555]">110%</span>
            </div>
        </div>
    )
}

export default function App() {
    return (
        <div className="w-full h-screen overflow-hidden flex flex-col relative bg-white">
            <TitleBar />
            <Ribbon />
            <FormulaBar />
            <Sheet />
            <SheetTabs />
            <StatusBar />
            <div className="absolute left-[850px] top-[926px] w-[220px] flex flex-col items-center text-[#c0c0c0]/50 pointer-events-none font-bold select-none">
                <div className="h-[68px] text-[70px] leading-[78px] font-['DejaVu_Sans'] scale-x-[1.700]" dir="rtl">نفذلي</div>
                <div className="text-[33px] leading-[36px] font-['Open_Sans']">nafezly.com</div>
            </div>
        </div>
    )
}
